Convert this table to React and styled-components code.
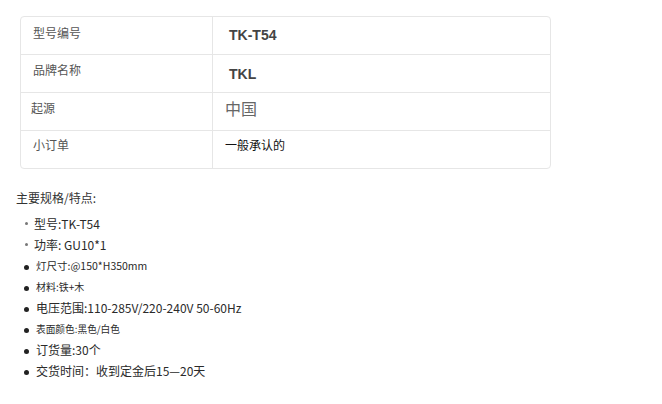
import React from "react";
import styled, { createGlobalStyle } from "styled-components";

const GlobalStyles = createGlobalStyle`
  body {
    margin: 0;
    padding: 0;
    background: #fff;
    font-family: "Noto Sans CJK SC", "Noto Sans", sans-serif;
    color: #333;
  }
`
const Page = styled.div`
  padding: 16px 0 0 16px;
`
const Card = styled.div`
  margin-left: 4px;
  width: 529px;
  border: 1px solid #e6e6e6;
  border-radius: 4px;
`
const Row = styled.div`
  display: grid;
  grid-template-columns: 192px 1fr;
  height: 37px;
  border-top: ${p => (p.first ? "none" : "1px solid #e6e6e6")};
`
const Label = styled.div`
  display: flex;
  align-items: center;
  padding-left: ${p => p.indent}px;
  padding-bottom: ${p => p.lift || 0}px;
  font-size: 12px;
  color: #555;
  border-right: 1px solid #e6e6e6;
`
const Value = styled.div`
  display: flex;
  align-items: center;
  padding-left: ${p => p.indent}px;
  padding-bottom: ${p => p.lift || 0}px;
  font-family: ${p => (p.latin ? '"Liberation Sans", Arial, sans-serif' : '"Noto Sans CJK SC", sans-serif')};
  font-weight: ${p => (p.bold ? 700 : 400)};
  font-size: ${p => p.size || 12}px;
  color: ${p => p.color || "#444"};
`
const Title = styled.div`
  margin-top: 19px;
  font-size: 12px;
  color: #333;
  line-height: 20px;
`
const List = styled.ul`
  list-style: none;
  margin: 5px 0 0;
  padding: 0 0 0 6px;
`
const Item = styled.li`
  display: flex;
  align-items: center;
  height: 21px;
  font-size: ${p => p.size}px;
  color: #2a2a2a;
`
const Bullet = styled.span`
  display: inline-block;
  width: ${p => (p.small ? 3 : 5)}px;
  height: ${p => (p.small ? 3 : 5)}px;
  border-radius: 50%;
  background: ${p => (p.small ? "#777" : "#222")};
  margin: ${p => (p.small ? "0 6px 0 3px" : "4px 7px 0 2px")};
  flex: none;
`

const rows = [
  { label: "型号编号", value: "TK-T54", latin: true, bold: true, size: 14, li: 12, vi: 16, ll: 6, vl: 2 },
  { label: "品牌名称", value: "TKL", latin: true, bold: true, size: 14, li: 12, vi: 16, ll: 8, vl: 0 },
  { label: "起源", value: "中国", size: 16, color: "#666", li: 10, vi: 12, ll: 8, vl: 8 },
  { label: "小订单", value: "一般承认的", size: 12, color: "#111", li: 12, vi: 12, ll: 11, vl: 11 },
];

const specs = [
  { text: "型号:TK-T54", size: 12, small: true },
  { text: "功率: GU10*1", size: 12, small: true },
  { text: "灯尺寸:@150*H350mm", size: 10.5 },
  { text: "材料:铁+木", size: 10 },
  { text: "电压范围:110-285V/220-240V 50-60Hz", size: 12 },
  { text: "表面颜色:黑色/白色", size: 9.7 },
  { text: "订货量:30个", size: 12 },
  { text: "交货时间：收到定金后15—20天", size: 12 },
];

export default function App() {
  return (
    <>
      <GlobalStyles />
      <Page>
        <Card>
          {rows.map((r, i) => (
            <Row key={r.label} first={i === 0}>
              <Label indent={r.li} lift={r.ll}>{r.label}</Label>
              <Value indent={r.vi} lift={r.vl} latin={r.latin} bold={r.bold} size={r.size} color={r.color}>
                {r.value}
              </Value>
            </Row>
          ))}
        </Card>
        <Title>主要规格/特点:</Title>
        <List>
          {specs.map(s => (
            <Item key={s.text} size={s.size}>
              <Bullet small={s.small} />
              {s.text}
            </Item>
          ))}
        </List>
      </Page>
    </>
  );
}
